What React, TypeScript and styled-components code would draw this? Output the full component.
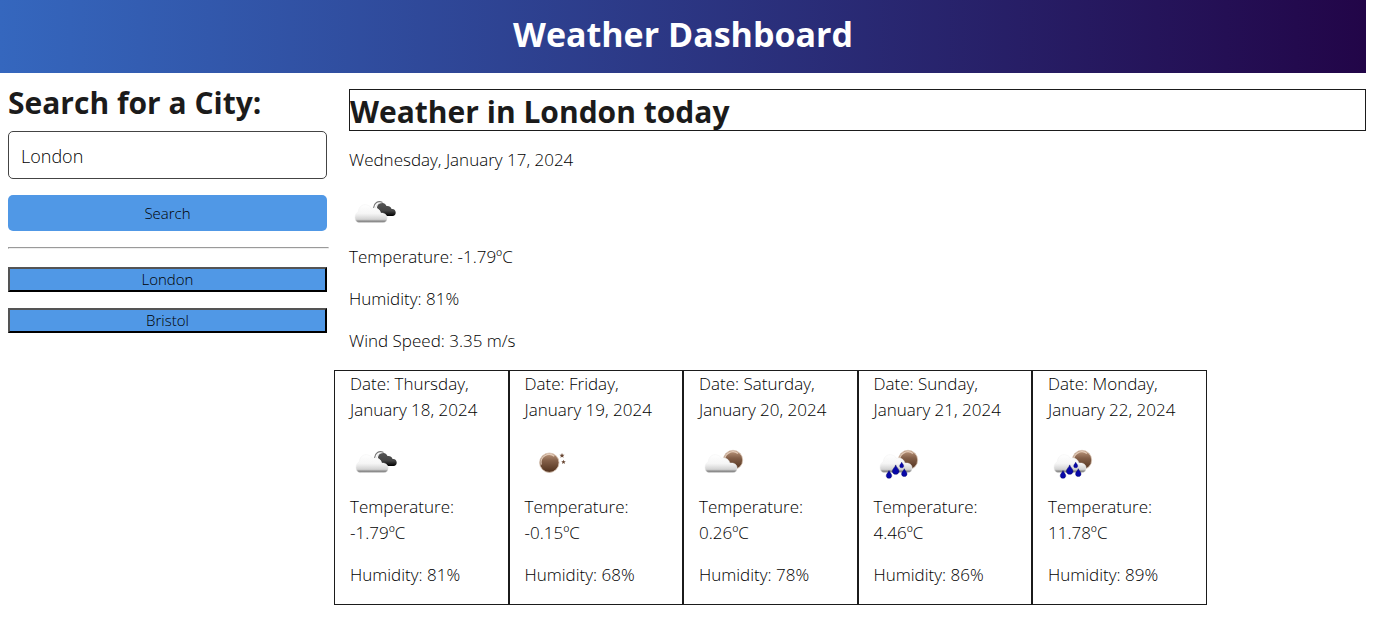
import React from 'react';
import styled, { createGlobalStyle } from 'styled-components';

const GlobalStyle = createGlobalStyle`
  *, *::before, *::after { box-sizing: border-box; }
  body {
    margin: 0;
    background: #fff;
    color: #000;
    font-family: "Segoe UI", "Open Sans", "Noto Sans", sans-serif;
    font-size: 17px;
    font-weight: 300;
    line-height: 26px;
  }
`;

const Page = styled.div`
  padding-right: 15px;
`;

const Header = styled.header`
  padding: 10px 0 15px;
  background: linear-gradient(to right, #3567be, #220548);
  text-align: center;
`;

const Title = styled.h1`
  margin: 0;
  color: #fff;
  font-size: 34px;
  font-weight: 700;
  line-height: 48px;
`;

const Columns = styled.div`
  display: grid;
  grid-template-columns: 334px minmax(0, 1fr);
`;

const Sidebar = styled.aside`
  padding: 10px 7px 0 8px;
`;

const SearchForm = styled.form`
  display: flex;
  flex-direction: column;
`;

const SearchLabel = styled.label`
  margin-bottom: 8px;
  color: #1b1b1b;
  font-size: 30px;
  font-weight: 700;
  line-height: 40px;
`;

const CityInput = styled.input`
  width: 100%;
  height: 48px;
  padding: 10px 12px 8px;
  border: 1px solid #444;
  border-radius: 5px;
  background: #fff;
  color: inherit;
  font: inherit;
  font-size: 18px;
`;

const SearchButton = styled.button`
  height: 36px;
  margin-top: 16px;
  border: 0;
  border-radius: 5px;
  background: #5098e6;
  color: #000;
  font: inherit;
  font-size: 15px;
`;

const Divider = styled.hr`
  margin: 16px -2px 18px 0;
`;

const History = styled.div`
  display: grid;
  gap: 16px;
`;

const HistoryButton = styled.button`
  height: 25px;
  padding: 0 0 1px;
  border: 2px outset #000;
  background: #5098e6;
  color: #000;
  font: inherit;
  font-size: 15px;
  line-height: 20px;
`;

const Main = styled.main`
  padding: 16px 0 0 15px;
`;

const CityHeading = styled.h2`
  margin: 0 0 16px;
  padding-top: 4px;
  border: 1px solid #1b1b1b;
  color: #1b1b1b;
  font-size: 30px;
  font-weight: 700;
  line-height: 36px;
`;

const Text = styled.p`
  margin: 0 0 16px;
`;

const Icon = styled.svg`
  display: block;
  width: 50px;
  height: 50px;
  margin-bottom: 5px;
`;

const Forecast = styled.section`
  display: flex;
  margin: 0 -15px;
`;

const Day = styled.article`
  flex: 0 0 calc(100% / 6);
  padding: 0 15px;
  border: 1px solid #1b1b1b;
`;

type Sky = 'broken' | 'clear' | 'few' | 'rain';

const CLOUD =
  'M10.500 33.600C8 33.600 6 31.500 6 28.500C6 25.500 7.500 23.500 9.500 22.500C9.500 18.500 12.500 15.700 16 15.700C19 15.700 21.500 17 22.500 19.500C26 18 30 20 31 24C35 23.500 38.200 25.500 38.200 29C38.200 32 36.500 33.600 34 33.600Z';

const DARK_CLOUD =
  'M28 19C28 15.500 31 13.500 33.500 14C35.500 14 37 15.500 37.500 17C40 16.500 42.500 18 42.500 20C45 19.500 46.700 21.500 46.700 23.500C46.700 25.500 45.500 27 43.500 27H38C36 27 35.500 26 34.500 25H32C32 22 30.500 20.500 28 19Z';

const DROPS = [
  { x: 15, y: 35.3, s: 0.95 },
  { x: 21.7, y: 30.5, s: 1.15 },
  { x: 27.7, y: 25.9, s: 0.7 },
  { x: 30.3, y: 33.5, s: 0.95 },
];

const Moon = ({ x, y, id }: { x: number; y: number; id: string }) => (
  <>
    <circle cx={x} cy={y} r="9.700" fill={`url(#${id}-moon)`} stroke="#d8c4b4" strokeWidth="0.800" />
    <path
      d={`M${x - 8} ${y + 2}A8.200 8.200 0 0 1 ${x + 5} ${y - 6.5}`}
      fill="none"
      stroke="#f0dccb"
      strokeWidth="1.300"
      opacity="0.800"
    />
  </>
);

function SkyIcon({ sky, id, label }: { sky: Sky; id: string; label: string }) {
  return (
    <Icon viewBox="0 0 50 50" role="img" aria-label={label}>
      <defs>
        <linearGradient id={`${id}-cloud`} x1="0" y1="0" x2="0" y2="1">
          <stop offset="0" stopColor="#fff" />
          <stop offset="0.500" stopColor="#f5f5f5" />
          <stop offset="0.820" stopColor="#d2d2d2" />
          <stop offset="0.900" stopColor="#999" />
          <stop offset="1" stopColor="#777" />
        </linearGradient>
        <linearGradient id={`${id}-dark`} x1="0" y1="0" x2="0" y2="1">
          <stop offset="0" stopColor="#555" />
          <stop offset="0.600" stopColor="#444" />
          <stop offset="1" stopColor="#000" />
        </linearGradient>
        <linearGradient id={`${id}-moon`} x1="0" y1="0" x2="0" y2="1">
          <stop offset="0" stopColor="#c09a80" />
          <stop offset="0.400" stopColor="#835f48" />
          <stop offset="1" stopColor="#50301c" />
        </linearGradient>
      </defs>
      {sky === 'clear' && (
        <>
          <Moon x={24.3} y={23.7} id={id} />
          <path d="M37 14l.7 1.700 1.800.1-1.400 1.200.5 1.800-1.600-1-1.600 1 .5-1.800-1.400-1.200 1.800-.1z" fill="#684632" />
          <path d="M38.500 20.700l.6 1.500 1.600.1-1.200 1.100.4 1.600-1.400-.9-1.400.9.4-1.600-1.200-1.100 1.600-.1z" fill="#684632" />
        </>
      )}
      {sky === 'broken' && (
        <>
          <path d={DARK_CLOUD} fill={`url(#${id}-dark)`} />
          <path d="M24.500 19C25 14 29 11 33.500 13.500" fill="none" stroke="#777" strokeWidth="1.200" />
          <path d="M26.500 19C27.500 15.500 29.500 13.500 32.500 14" fill="none" stroke="#ddd" strokeWidth="0.800" />
        </>
      )}
      {(sky === 'few' || sky === 'rain') && <Moon x={34} y={21} id={id} />}
      {sky !== 'clear' && (
        <path d={CLOUD} fill={`url(#${id}-cloud)`} stroke="#eee" strokeWidth="0.400" />
      )}
      {sky === 'rain' &&
        DROPS.map((d) => (
          <path
            key={d.x}
            transform={`translate(${d.x} ${d.y}) scale(${d.s})`}
            d="M0-4C.5-2 2.900-.5 2.900 1.500C2.900 3.200 1.600 4.200 0 4.200S-2.900 3.200-2.900 1.500C-2.900-.5-.5-2 0-4Z"
            fill="#0808a8"
            stroke="#00005c"
            strokeWidth="0.400"
          />
        ))}
    </Icon>
  );
}

const DAYS: { date: string; sky: Sky; label: string; temp: string; humidity: number }[] = [
  { date: 'Thursday, January 18, 2024', sky: 'broken', label: 'Broken clouds', temp: '-1.79', humidity: 81 },
  { date: 'Friday, January 19, 2024', sky: 'clear', label: 'Clear sky', temp: '-0.15', humidity: 68 },
  { date: 'Saturday, January 20, 2024', sky: 'few', label: 'Few clouds', temp: '0.26', humidity: 78 },
  { date: 'Sunday, January 21, 2024', sky: 'rain', label: 'Rain', temp: '4.46', humidity: 86 },
  { date: 'Monday, January 22, 2024', sky: 'rain', label: 'Rain', temp: '11.78', humidity: 89 },
];

export default function App() {
  return (
    <>
      <GlobalStyle />
      <Page>
        <Header>
          <Title>Weather Dashboard</Title>
        </Header>
        <Columns>
          <Sidebar>
            <SearchForm onSubmit={(e) => e.preventDefault()}>
              <SearchLabel htmlFor="city">Search for a City:</SearchLabel>
              <CityInput id="city" type="text" defaultValue="London" />
              <SearchButton type="submit">Search</SearchButton>
            </SearchForm>
            <Divider />
            <History>
              <HistoryButton type="button">London</HistoryButton>
              <HistoryButton type="button">Bristol</HistoryButton>
            </History>
          </Sidebar>
          <Main>
            <CityHeading>Weather in London today</CityHeading>
            <Text>Wednesday, January 17, 2024</Text>
            <SkyIcon sky="broken" id="today" label="Broken clouds" />
            <Text>Temperature: -1.79ºC</Text>
            <Text>Humidity: 81%</Text>
            <Text>Wind Speed: 3.35 m/s</Text>
            <Forecast>
              {DAYS.map((day, i) => (
                <Day key={day.date}>
                  <Text>{`Date: ${day.date}`}</Text>
                  <SkyIcon sky={day.sky} id={`day${i}`} label={day.label} />
                  <Text>{`Temperature: ${day.temp}ºC`}</Text>
                  <Text>{`Humidity: ${day.humidity}%`}</Text>
                </Day>
              ))}
            </Forecast>
          </Main>
        </Columns>
      </Page>
    </>
  );
}
